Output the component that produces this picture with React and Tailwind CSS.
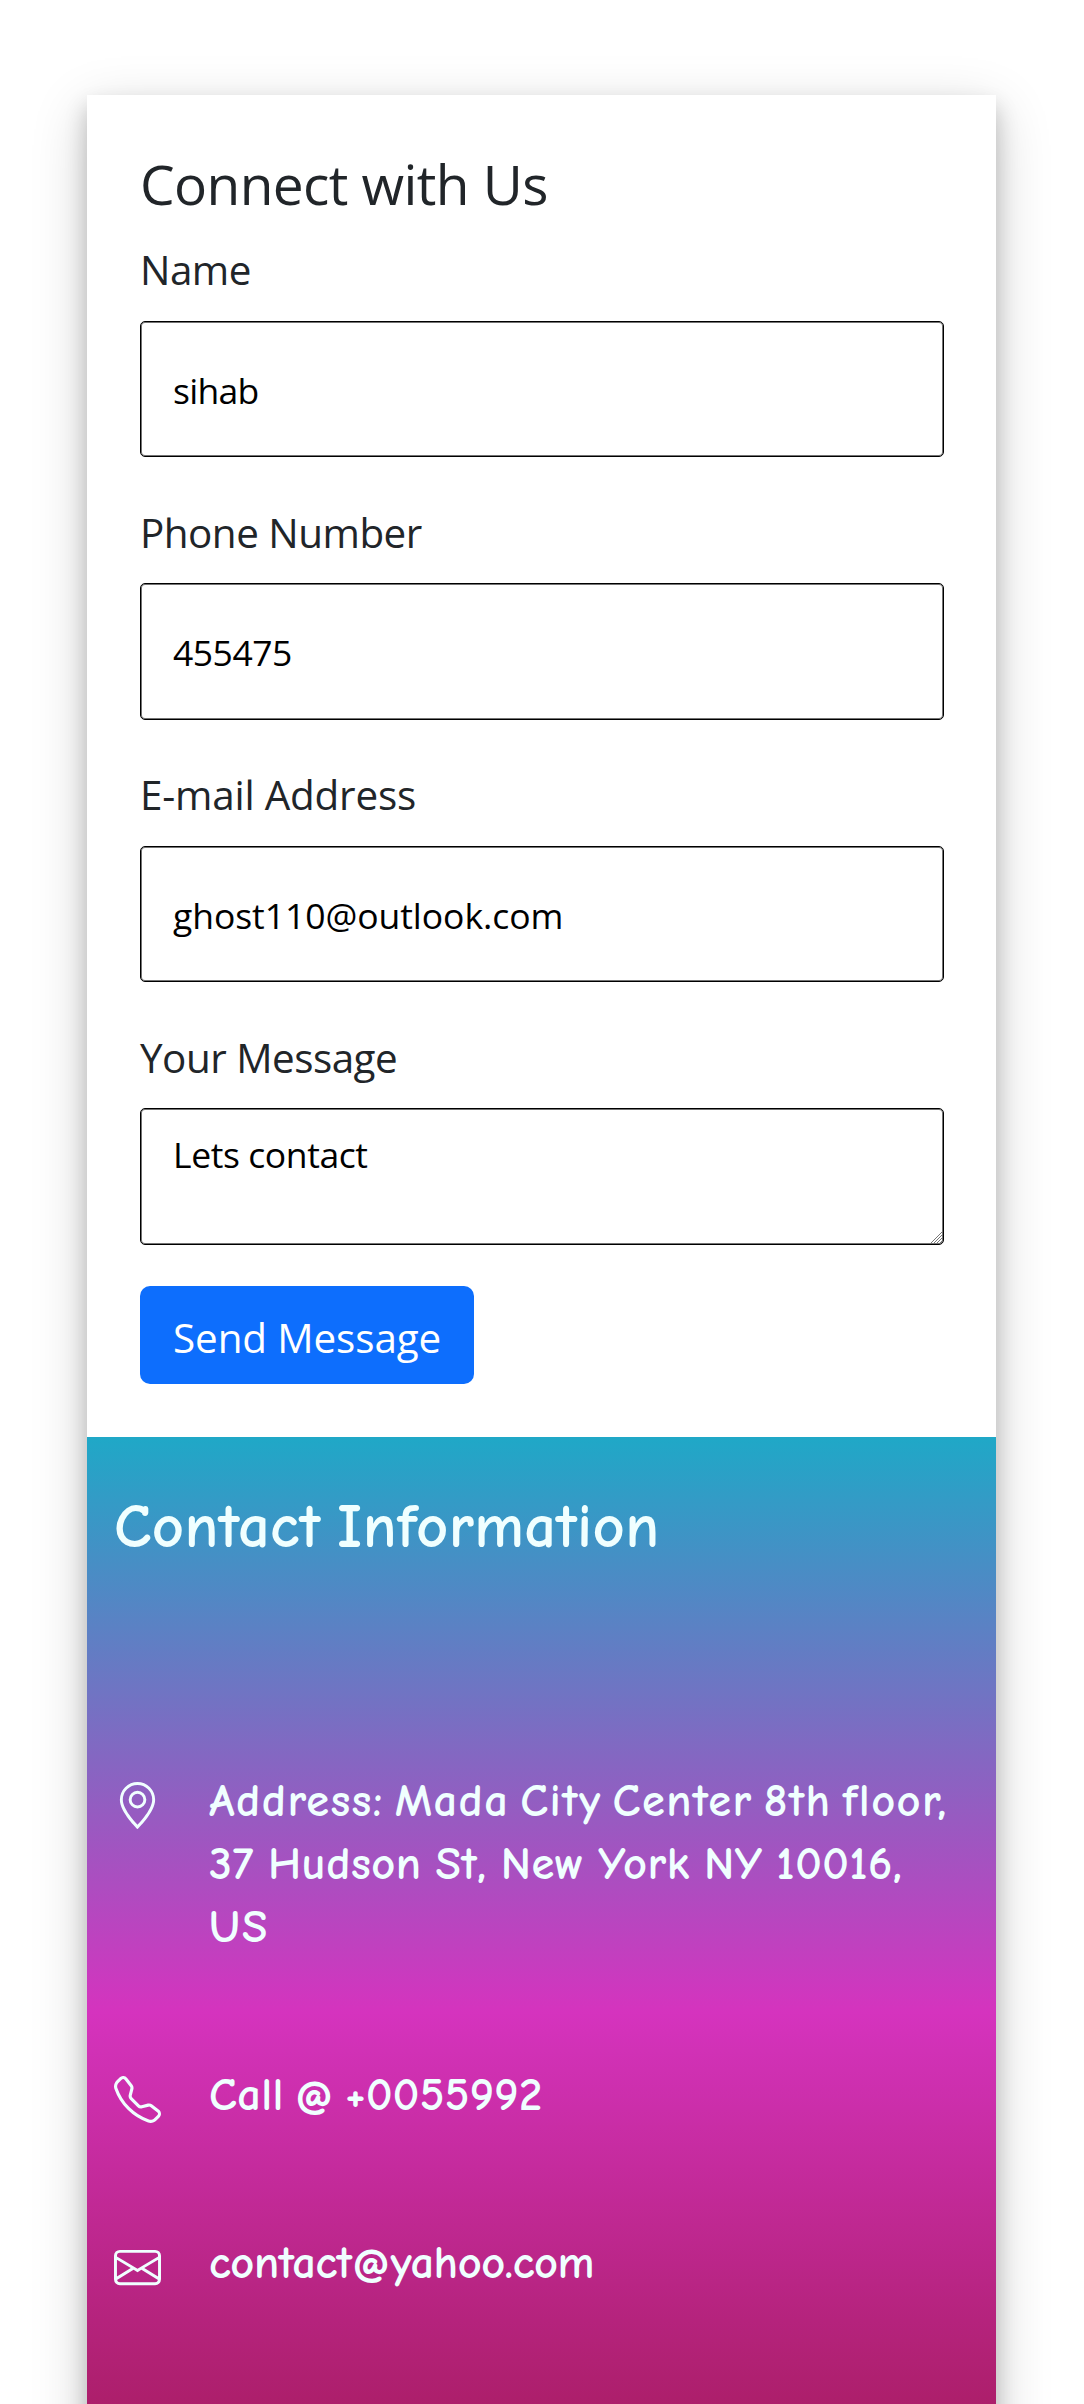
import { BsGeoAlt, BsTelephone, BsEnvelope } from 'react-icons/bs';

const fields = [
  { label: 'Name', value: 'sihab', labelClass: 'tracking-[-0.5px]', valueClass: 'tracking-[-0.7px]' },
  { label: 'Phone Number', value: '455475', labelClass: 'tracking-[-0.5px]', valueClass: 'tracking-[-0.5px]' },
  { label: 'E-mail Address', value: 'ghost110@outlook.com', labelClass: 'tracking-[-0.2px]', valueClass: 'tracking-[-0.05px]' },
];

const box =
  'block h-[136.5px] w-full resize-none rounded-[5px] border border-black bg-white pl-[32px] text-[35.5px] text-black shadow-[inset_0_0_0_1px_rgba(0,0,0,0.55)] outline-none';

function Label({ children, className }) {
  return <label className={`mb-[19.5px] block text-[40.4px] leading-[63px] ${className}`}>{children}</label>;
}

function ContactRow({ icon: Icon, className, children }) {
  return (
    <div className={`flex ${className}`}>
      <Icon className="mt-[12px] size-[47px] shrink-0" />
      <div className="ml-[48px] text-[46.5px] leading-[63px] whitespace-nowrap">{children}</div>
    </div>
  );
}

export default function App() {
  return (
    <div className="h-[2404px] overflow-hidden bg-white px-[87px] pt-[95px] font-['Open_Sans','Noto_Sans',sans-serif] text-[#212529]">
      <main className="w-[909px] shadow-[0_10.5px_21px_0_rgba(0,0,0,0.2),0_15.75px_52.5px_0_rgba(0,0,0,0.19)]">
        <form className="h-[1342px] bg-white pt-[53px] pr-[52px] pl-[53px]">
          <h2 className="mb-[19px] text-[55px] leading-[71px] tracking-[-0.6px]">Connect with Us</h2>
          {fields.map((f) => (
            <div key={f.label} className="mb-[43.5px]">
              <Label className={f.labelClass}>{f.label}</Label>
              <input className={`${box} pt-[2px] ${f.valueClass}`} defaultValue={f.value} />
            </div>
          ))}
          <Label className="tracking-[-0.5px]">Your Message</Label>
          <div className="relative">
            <textarea className={`${box} pt-[21px] leading-[48px] tracking-[-0.4px]`} defaultValue="Lets contact" />
            <svg className="absolute right-[2px] bottom-[2px] size-[11px]" viewBox="0 0 11 11" stroke="#777" strokeWidth="1">
              <path d="M0 11 11 0M3 11l8-8M6 11l5-5M9 11l2-2" fill="none" />
            </svg>
          </div>
          <button
            type="button"
            className="mt-[41.5px] flex h-[98px] w-[334px] items-center rounded-[10px] bg-[#0d6efd] pt-[7px] pl-[33px] text-[40.4px] tracking-[-0.1px] whitespace-nowrap text-white"
          >
            Send Message
          </button>
        </form>
        <section className="h-[1100px] bg-[linear-gradient(to_bottom,#1fa8c7_0px,#d533be_575px,#ab1e68_980px)] pt-[55px] pl-[27px] font-['Comic_Neue','Comic_Sans_MS','Open_Sans',sans-serif] font-bold text-[azure] [font-variant-ligatures:none]">
          <h2 className="text-[62.5px] leading-[70px] whitespace-nowrap">
            <span className="[word-spacing:-6px] tracking-[0.3px]">Contact Information</span>
          </h2>
          <ContactRow icon={BsGeoAlt} className="mt-[208px]">
            <p className="tracking-[1.4px] [word-spacing:-7px]">Address: Mada City Center 8th floor,</p>
            <p className="tracking-[0.5px] [word-spacing:-3px]">37 Hudson St, New York NY 10016,</p>
            <p className="tracking-[2px]">US</p>
          </ContactRow>
          <ContactRow icon={BsTelephone} className="mt-[105px]">
            <p className="tracking-[0.3px] [word-spacing:-6px]">Call @ +0055992</p>
          </ContactRow>
          <ContactRow icon={BsEnvelope} className="mt-[105px]">
            <p className="tracking-[-0.5px]">contact@yahoo.com</p>
          </ContactRow>
        </section>
      </main>
    </div>
  );
}
